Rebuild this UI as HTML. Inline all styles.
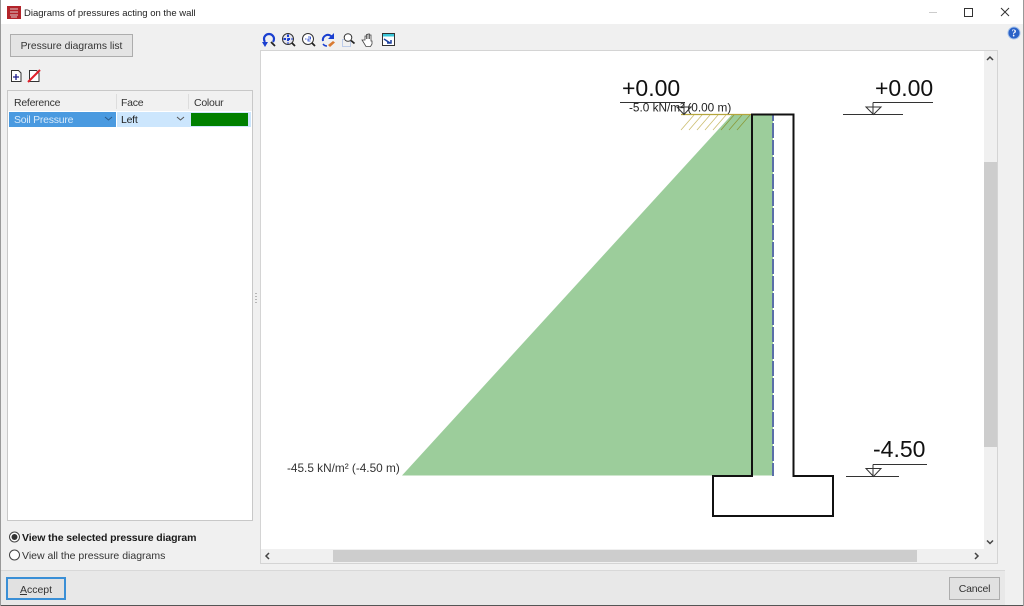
<!DOCTYPE html>
<html><head><meta charset="utf-8"><style>
html,body{margin:0;padding:0}
body{width:1024px;height:606px;overflow:hidden;position:relative;background:#f0f0f0;font-family:"Liberation Sans",sans-serif;font-size:11px;color:#333}
.a{position:absolute;white-space:nowrap}
.btn{position:absolute;box-sizing:border-box;background:#e1e1e1;border:1px solid #adadad;text-align:center}
.t{font-size:10.5px;letter-spacing:-.25px}
</style></head><body>
<div class="a" style="left:0;top:0;width:1024px;height:24px;background:#fff"></div>
<div class="a" style="left:7px;top:6px;width:14px;height:13px;background:#b3242a"></div>
<svg class="a" style="left:7px;top:6px" width="14" height="13"><path d="M3 3h8M3 6h8M3 9h8M4 11h6" stroke="#dcc" stroke-width="1" fill="none"/></svg>
<div class="a" style="left:24px;top:7px;color:#222;font-size:9.5px;line-height:13px">Diagrams of pressures acting on the wall</div>
<svg class="a" style="left:920px;top:0" width="104" height="25" fill="none"><path d="M9 12.500h8" stroke="#ccc"/><rect x="44.500" y="8.500" width="8" height="8" stroke="#333"/><path d="M81 8l8 8M89 8l-8 8" stroke="#333"/></svg>

<div class="btn" style="left:10px;top:34px;width:123px;height:23px;line-height:23px;background:#e4e4e4;font-size:10.300px">Pressure diagrams list</div>
<svg class="a" style="left:10px;top:69px" width="32" height="14" fill="none"><path d="M1.500 1.500h7l2.500 2.500v8.500h-9.500z" stroke="#333" fill="#fff"/><path d="M6 5v6M3 8h6" stroke="#1a1a8a" stroke-width="1.300"/><path d="M19.500 1.500h7l2.500 2.500v8.500h-9.500z" stroke="#333" fill="#fff"/><path d="M18 13L30 1" stroke="#e0202a" stroke-width="2"/></svg>

<div class="a" style="left:7px;top:90px;width:246px;height:431px;box-sizing:border-box;border:1px solid #c8c8c8;background:#fff"></div>
<div class="a" style="left:8px;top:91px;width:244px;height:20px;background:#f1f1f1"></div>
<div class="a" style="left:116px;top:94px;width:1px;height:15px;background:#ddd"></div>
<div class="a" style="left:188px;top:94px;width:1px;height:15px;background:#ddd"></div>
<div class="a t" style="left:14px;top:97px;line-height:12px">Reference</div>
<div class="a t" style="left:121px;top:97px;line-height:12px">Face</div>
<div class="a t" style="left:194px;top:97px;line-height:12px">Colour</div>
<div class="a t" style="left:9px;top:112px;width:107px;height:15px;background:#4a9ae0;color:#d8eafa;line-height:16px;text-indent:5px">Soil Pressure</div>
<div class="a t" style="left:117px;top:112px;width:72px;height:15px;background:#cce6fd;color:#222;line-height:16px;text-indent:4px">Left</div>
<div class="a" style="left:189px;top:112px;width:62px;height:15px;background:#cce6fd"></div>
<div class="a" style="left:191px;top:113px;width:57px;height:13px;background:#008000"></div>
<svg class="a" style="left:100px;top:115px" width="90" height="8" fill="none"><path d="M5 2l3.500 3L12 2" stroke="#2a5a8a"/><path d="M77 2l3.500 3L84 2" stroke="#555"/></svg>

<div class="a" style="left:255px;top:293px;width:2px;height:11px;background-image:linear-gradient(#b5b5b5 1px,transparent 1px);background-size:2px 3px"></div>

<svg class="a" style="left:9px;top:531px" width="12" height="30" fill="none"><circle cx="5.500" cy="6" r="5" stroke="#444" fill="#fff"/><circle cx="5.500" cy="6" r="3" fill="#333"/><circle cx="5.500" cy="24" r="5" stroke="#444" fill="#fff"/></svg>
<div class="a" style="left:22px;top:532px;font-weight:bold;color:#1a1a1a;font-size:10.500px;letter-spacing:-.12px;line-height:13px">View the selected pressure diagram</div>
<div class="a" style="left:22px;top:550px;font-size:10.500px;line-height:13px">View all the pressure diagrams</div>

<svg class="a" style="left:261px;top:32px" width="140" height="17" fill="none">
<path d="M4 10a5 5 0 1 1 8 0" stroke="#1a3fd0" stroke-width="2.200"/><path d="M1 10l6 0-3 5z" fill="#1a3fd0"/><path d="M10 10l4 4" stroke="#222" stroke-width="1.800"/>
<circle cx="27" cy="7" r="5.500" stroke="#333" fill="#e4e4ee"/><path d="M27 2.500v9M22.500 7h9" stroke="#1a3fd0" stroke-width="2" stroke-dasharray="2.500 1.500"/><path d="M31 11l3 3" stroke="#222" stroke-width="1.800"/>
<circle cx="47" cy="7" r="5.500" stroke="#333" fill="#fff"/><path d="M44 7h1.500M47 5h2.500v2h-2.500v2h2.500" stroke="#1a3fd0" stroke-width=".8"/><path d="M51 11l3 3" stroke="#222" stroke-width="1.800"/>
<path d="M62 9a5 5 0 0 1 8-5l1 1" stroke="#1a3fd0" stroke-width="2"/><path d="M73 1v6h-6z" fill="#1a3fd0"/><path d="M62 12a5 5 0 0 0 4 2" stroke="#1a3fd0" stroke-width="1.500"/><path d="M67 13l5-4 2 1.500-5 4.500z" fill="#d97a30"/>
<rect x="81.500" y="7.500" width="8" height="7" stroke="#8aa8e0" stroke-dasharray="1 1"/><circle cx="87" cy="5.500" r="3.800" stroke="#333" fill="#fff"/><path d="M90 8.500l3.500 3" stroke="#222" stroke-width="1.800"/>
<path d="M104 8V4h1.500v3V2.500h1.500V7V2h1.500v5V3h1.500v6h1v3l-1.500 2.500h-4.500l-3-5-1-1.500z" stroke="#444" fill="#fff" stroke-width=".8"/>
<rect x="121.500" y="1.500" width="12" height="12" stroke="#333" fill="#fff"/><path d="M122 2h11v2.500h-11z" fill="#39c6d8"/><path d="M123 7l6 4M126 11h4V8" stroke="#1a3fa0" stroke-width="1.500"/>
</svg>

<svg class="a" style="left:1007px;top:26px" width="14" height="14"><circle cx="7" cy="7" r="6" fill="#2a62c8" stroke="#a8c4ea"/><text x="7" y="10.500" font-size="10" font-weight="bold" fill="#fff" text-anchor="middle" font-family="Liberation Serif">?</text></svg>

<div class="a" style="left:260px;top:50px;width:738px;height:514px;box-sizing:border-box;border:1px solid #d4d4d4;background:#fff"></div>
<div class="a" style="left:984px;top:51px;width:13px;height:512px;background:#f0f0f0"></div>
<div class="a" style="left:261px;top:549px;width:723px;height:14px;background:#f0f0f0"></div>
<div class="a" style="left:984px;top:162px;width:13px;height:285px;background:#cdcdcd"></div>
<div class="a" style="left:333px;top:550px;width:584px;height:12px;background:#cdcdcd"></div>
<svg class="a" style="left:260px;top:50px" width="738" height="514" fill="none"><path d="M727 10l3-3 3 3M727 490.500l3 3 3-3M9 503l-3 3 3 3M715 503l3 3-3 3" stroke="#444" stroke-width="1.500"/></svg>

<svg class="a" style="left:261px;top:51px" width="723" height="498" fill="none" font-family="Liberation Sans">
<polygon points="141,424.500 471,63.500 512,63.500 512,424.500" fill="#9ccd9b"/>
<path d="M420 79l13-15M428 79l13-15M436 79l13-15M444 79l13-15M452 79l13-15" stroke="#cdbf72" stroke-width=".8"/>
<path d="M460 79l13-15M468 79l13-15M476 79l13-15" stroke="#8a9a3a" stroke-width=".8"/>
<path d="M420 63.500h71" stroke="#b5a53c" stroke-width="1.200"/>
<path d="M512 64v361" stroke="#5a6fa8" stroke-width="2" stroke-dasharray="15 2" stroke-dashoffset="9"/>
<path d="M491 424.500V63.500H532.500V425H572V465H452V425H491z" stroke="#111" stroke-width="2"/>
<path d="M359 51.500h65M423 51.500v12M416 56h14l-7 7.500z" stroke="#333" stroke-width="1"/>
<path d="M582 63.500h60M612 51.500h60M612 51.500v12M605 56h15l-7.500 7.500zM585 425.500h53M612 413.500h54M612 413.500v12M605 417.500h15l-7.500 8z" stroke="#333" stroke-width="1"/>
<g fill="#111" stroke="none">
<text x="361" y="45" font-size="23">+0.00</text>
<text x="614" y="45" font-size="23">+0.00</text>
<text x="612" y="406" font-size="23">-4.50</text>
<text x="368" y="60.500" font-size="11.800" fill="#222">-5.0 kN/m² (0.00 m)</text>
<text x="26" y="421" font-size="11.800" fill="#333">-45.5 kN/m² (-4.50 m)</text>
</g>
</svg>

<div class="a" style="left:0;top:570px;width:1005px;height:36px;background:#e8e8e8;border-top:1px solid #d8d8d8;box-sizing:border-box"></div>
<div class="btn" style="left:6px;top:577px;width:60px;height:23px;border:2px solid #3a8fd6;line-height:22px;font-size:10.500px"><u>A</u>ccept</div>
<div class="btn" style="left:949px;top:577px;width:51px;height:23px;line-height:23px;font-size:10.500px;letter-spacing:-.2px">Cancel</div>
<div class="a" style="left:0;top:605px;width:1024px;height:1px;background:#555"></div>
<div class="a" style="left:0;top:0;width:1px;height:606px;background:#999"></div>
<div class="a" style="left:1023px;top:0;width:1px;height:606px;background:#999"></div>
</body></html>
